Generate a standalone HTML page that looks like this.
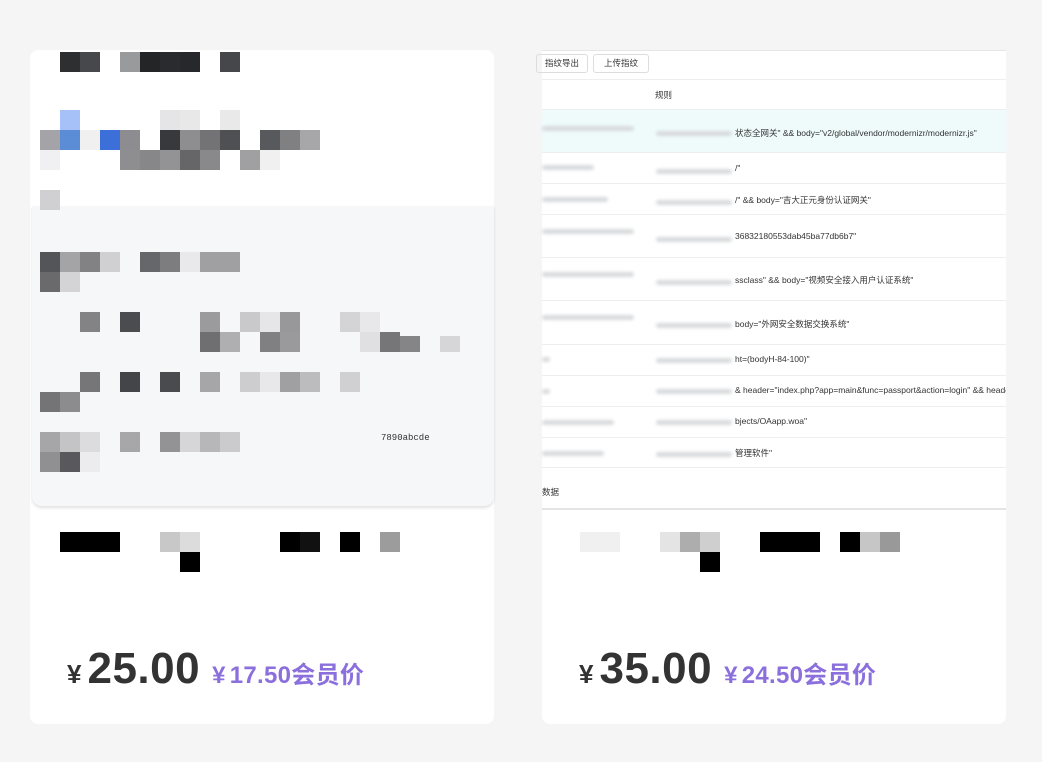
<!DOCTYPE html>
<html><head><meta charset="utf-8"><style>
*{margin:0;padding:0;box-sizing:border-box}
body{width:1042px;height:762px;background:#f5f5f6;position:relative;overflow:hidden;font-family:"Liberation Sans","Noto Sans CJK SC",sans-serif}
.card{position:absolute;top:50px;width:464px;height:674px;background:#fff;border-radius:8px;overflow:hidden}
.b{position:absolute;width:20px;height:20px}
.p{position:absolute;top:644px;white-space:nowrap}
.big{font-size:44px;font-weight:bold;color:#333;letter-spacing:0.5px;margin-left:6px}
.yen{font-size:26px;color:#333;font-weight:bold}
.pur{font-size:24px;color:#8b6fdc;font-weight:bold;margin-left:12px;letter-spacing:0.3px}
.pur i{font-style:normal;margin-right:4px}
.row{position:absolute;left:542px;width:464px;border-top:1px solid #eceeef;font-size:8.5px;color:#333}
.row span{position:absolute;left:193px;white-space:nowrap}
.blur{position:absolute;height:5px;background:#d8dadc;border-radius:3px;filter:blur(1.5px)}
</style></head><body>
<div class="card" style="left:30px"></div>
<div style="position:absolute;left:32px;top:206px;width:462px;height:300px;background:#f6f7f9;border-radius:0 0 10px 10px;box-shadow:0 2px 3px rgba(0,0,0,.12)"></div>
<div class="b" style="left:60px;top:52px;background:#2e2f31"></div>
<div class="b" style="left:80px;top:52px;background:#47484b"></div>
<div class="b" style="left:120px;top:52px;background:#999a9c"></div>
<div class="b" style="left:140px;top:52px;background:#232526"></div>
<div class="b" style="left:160px;top:52px;background:#2a2b2e"></div>
<div class="b" style="left:180px;top:52px;background:#26282b"></div>
<div class="b" style="left:220px;top:52px;background:#45474a"></div>
<div class="b" style="left:60px;top:110px;background:#a6c1f7"></div>
<div class="b" style="left:160px;top:110px;background:#e5e5e7"></div>
<div class="b" style="left:180px;top:110px;background:#e8e8e8"></div>
<div class="b" style="left:220px;top:110px;background:#e9e9e9"></div>
<div class="b" style="left:40px;top:130px;background:#a4a4a8"></div>
<div class="b" style="left:60px;top:130px;background:#5b8dd6"></div>
<div class="b" style="left:80px;top:130px;background:#f0f0f0"></div>
<div class="b" style="left:100px;top:130px;background:#3d6fd8"></div>
<div class="b" style="left:120px;top:130px;background:#8d8d91"></div>
<div class="b" style="left:160px;top:130px;background:#38393d"></div>
<div class="b" style="left:180px;top:130px;background:#8e8e90"></div>
<div class="b" style="left:200px;top:130px;background:#737375"></div>
<div class="b" style="left:220px;top:130px;background:#4f5054"></div>
<div class="b" style="left:260px;top:130px;background:#58595d"></div>
<div class="b" style="left:280px;top:130px;background:#808082"></div>
<div class="b" style="left:300px;top:130px;background:#a7a7a9"></div>
<div class="b" style="left:40px;top:150px;background:#f0f0f2"></div>
<div class="b" style="left:120px;top:150px;background:#8e8e90"></div>
<div class="b" style="left:140px;top:150px;background:#87878a"></div>
<div class="b" style="left:160px;top:150px;background:#939395"></div>
<div class="b" style="left:180px;top:150px;background:#666668"></div>
<div class="b" style="left:200px;top:150px;background:#89898b"></div>
<div class="b" style="left:240px;top:150px;background:#a0a0a2"></div>
<div class="b" style="left:260px;top:150px;background:#f0f0f0"></div>
<div class="b" style="left:40px;top:190px;background:#d0d0d2"></div>
<div class="b" style="left:40px;top:252px;background:#545559"></div>
<div class="b" style="left:60px;top:252px;background:#a4a4a6"></div>
<div class="b" style="left:80px;top:252px;background:#828284"></div>
<div class="b" style="left:100px;top:252px;background:#d0d0d3"></div>
<div class="b" style="left:140px;top:252px;background:#66676b"></div>
<div class="b" style="left:160px;top:252px;background:#7d7d80"></div>
<div class="b" style="left:180px;top:252px;background:#e9e9eb"></div>
<div class="b" style="left:200px;top:252px;background:#a0a0a2;width:40px"></div>
<div class="b" style="left:40px;top:272px;background:#6a6a6c"></div>
<div class="b" style="left:60px;top:272px;background:#d4d4d6"></div>
<div class="b" style="left:80px;top:312px;background:#838385"></div>
<div class="b" style="left:120px;top:312px;background:#4b4c50"></div>
<div class="b" style="left:200px;top:312px;background:#9b9b9d"></div>
<div class="b" style="left:240px;top:312px;background:#c9c9cb"></div>
<div class="b" style="left:260px;top:312px;background:#e6e6e8"></div>
<div class="b" style="left:280px;top:312px;background:#98989a"></div>
<div class="b" style="left:340px;top:312px;background:#d4d4d7"></div>
<div class="b" style="left:360px;top:312px;background:#e8e8ea"></div>
<div class="b" style="left:200px;top:332px;background:#6f6f71"></div>
<div class="b" style="left:220px;top:332px;background:#afafb1"></div>
<div class="b" style="left:260px;top:332px;background:#808082"></div>
<div class="b" style="left:280px;top:332px;background:#9a9a9c"></div>
<div class="b" style="left:360px;top:332px;background:#e0e0e2"></div>
<div class="b" style="left:380px;top:332px;background:#767678"></div>
<div class="b" style="left:400px;top:336px;height:16px;background:#858587"></div>
<div class="b" style="left:440px;top:336px;height:16px;background:#d6d6d8"></div>
<div class="b" style="left:80px;top:372px;background:#767678"></div>
<div class="b" style="left:120px;top:372px;background:#444548"></div>
<div class="b" style="left:160px;top:372px;background:#4a4b4e"></div>
<div class="b" style="left:200px;top:372px;background:#a6a6a8"></div>
<div class="b" style="left:240px;top:372px;background:#cdcdcf"></div>
<div class="b" style="left:260px;top:372px;background:#e8e8ea"></div>
<div class="b" style="left:280px;top:372px;background:#a0a0a2"></div>
<div class="b" style="left:300px;top:372px;background:#bcbcbe"></div>
<div class="b" style="left:340px;top:372px;background:#d0d0d2"></div>
<div class="b" style="left:40px;top:392px;background:#747476"></div>
<div class="b" style="left:60px;top:392px;background:#8c8c8e"></div>
<div class="b" style="left:40px;top:432px;background:#a6a6a8"></div>
<div class="b" style="left:60px;top:432px;background:#c4c4c6"></div>
<div class="b" style="left:80px;top:432px;background:#dcdcde"></div>
<div class="b" style="left:120px;top:432px;background:#a7a7a9"></div>
<div class="b" style="left:160px;top:432px;background:#939395"></div>
<div class="b" style="left:180px;top:432px;background:#d6d6d8"></div>
<div class="b" style="left:200px;top:432px;background:#b7b7b9"></div>
<div class="b" style="left:220px;top:432px;background:#cbcbcd"></div>
<div style="position:absolute;left:381px;top:433px;font-family:'Liberation Mono',monospace;font-size:9px;color:#333">7890abcde</div>
<div class="b" style="left:40px;top:452px;background:#909092"></div>
<div class="b" style="left:60px;top:452px;background:#59595d"></div>
<div class="b" style="left:80px;top:452px;background:#ececee"></div>
<div class="b" style="left:60px;top:532px;width:60px;background:#000"></div>
<div class="b" style="left:160px;top:532px;background:#c8c8c8"></div>
<div class="b" style="left:180px;top:532px;background:#dcdcdc"></div>
<div class="b" style="left:180px;top:552px;background:#000"></div>
<div class="b" style="left:280px;top:532px;background:#000"></div>
<div class="b" style="left:300px;top:532px;background:#111"></div>
<div class="b" style="left:340px;top:532px;background:#000"></div>
<div class="b" style="left:380px;top:532px;background:#9c9c9c"></div>
<div class="p" style="left:67px"><span class="yen">¥</span><span class="big">25.00</span><span class="pur"><i>¥</i>17.50会员价</span></div>

<div class="card" style="left:542px"></div>
<div style="position:absolute;left:542px;top:50px;width:464px;height:460px;background:#fff;border-top:1px solid #e6e6e6;border-bottom:2px solid #e4e4e4"></div>
<div style="position:absolute;left:536px;top:54px;width:52px;height:19px;border:1px solid #ddd;border-radius:3px;font-size:8.5px;color:#333;line-height:17px;text-align:center">指纹导出</div>
<div style="position:absolute;left:593px;top:54px;width:56px;height:19px;border:1px solid #ddd;border-radius:3px;font-size:8.5px;color:#333;line-height:17px;text-align:center">上传指纹</div>
<div class="row" style="top:79px;height:30px"><span style="left:113px;top:9px">规则</span></div>
<div class="row" style="top:109px;height:43px;background:#effbfb"><span style="top:17px">状态全网关" &amp;&amp; body="v2/global/vendor/modernizr/modernizr.js"</span></div>
<div class="row" style="top:152px;height:31px"><span style="top:10px">/"</span></div>
<div class="row" style="top:183px;height:31px"><span style="top:10px">/" &amp;&amp; body="吉大正元身份认证网关"</span></div>
<div class="row" style="top:214px;height:43px"><span style="top:16px">36832180553dab45ba77db6b7"</span></div>
<div class="row" style="top:257px;height:43px"><span style="top:16px">ssclass" &amp;&amp; body="视频安全接入用户认证系统"</span></div>
<div class="row" style="top:300px;height:44px"><span style="top:17px">body="外网安全数据交换系统"</span></div>
<div class="row" style="top:344px;height:31px"><span style="top:9px">ht=(bodyH-84-100)"</span></div>
<div class="row" style="top:375px;height:31px"><span style="top:9px">&amp; header="index.php?app=main&amp;func=passport&amp;action=login" &amp;&amp; heade</span></div>
<div class="row" style="top:406px;height:31px"><span style="top:9px">bjects/OAapp.woa"</span></div>
<div class="row" style="top:437px;height:31px;border-bottom:1px solid #eceeef"><span style="top:9px">管理软件"</span></div>
<div class="row" style="top:468px;border:none;height:30px"><span style="left:0;top:18px">数据</span></div>
<div style="position:absolute;left:1006px;top:50px;width:36px;height:470px;background:#f5f5f6"></div>
<div class="blur" style="left:542px;top:126px;width:92px"></div><div class="blur" style="left:656px;top:131px;width:76px"></div>
<div class="blur" style="left:542px;top:165px;width:52px"></div><div class="blur" style="left:656px;top:169px;width:76px"></div>
<div class="blur" style="left:542px;top:197px;width:66px"></div><div class="blur" style="left:656px;top:200px;width:76px"></div>
<div class="blur" style="left:542px;top:229px;width:92px"></div><div class="blur" style="left:656px;top:237px;width:76px"></div>
<div class="blur" style="left:542px;top:272px;width:92px"></div><div class="blur" style="left:656px;top:280px;width:76px"></div>
<div class="blur" style="left:542px;top:315px;width:92px"></div><div class="blur" style="left:656px;top:323px;width:76px"></div>
<div class="blur" style="left:542px;top:357px;width:8px"></div><div class="blur" style="left:656px;top:358px;width:76px"></div>
<div class="blur" style="left:542px;top:389px;width:8px"></div><div class="blur" style="left:656px;top:389px;width:76px"></div>
<div class="blur" style="left:542px;top:420px;width:72px"></div><div class="blur" style="left:656px;top:420px;width:76px"></div>
<div class="blur" style="left:542px;top:451px;width:62px"></div><div class="blur" style="left:656px;top:452px;width:76px"></div>
<div class="b" style="left:580px;top:532px;width:40px;background:#f0f0f0"></div>
<div class="b" style="left:660px;top:532px;background:#e4e4e4"></div>
<div class="b" style="left:680px;top:532px;background:#adadad"></div>
<div class="b" style="left:700px;top:532px;background:#cfcfcf"></div>
<div class="b" style="left:700px;top:552px;background:#000"></div>
<div class="b" style="left:760px;top:532px;width:60px;background:#000"></div>
<div class="b" style="left:840px;top:532px;background:#000"></div>
<div class="b" style="left:860px;top:532px;background:#c6c6c6"></div>
<div class="b" style="left:880px;top:532px;background:#999"></div>
<div class="p" style="left:579px"><span class="yen">¥</span><span class="big">35.00</span><span class="pur"><i>¥</i>24.50会员价</span></div>
</body></html>
